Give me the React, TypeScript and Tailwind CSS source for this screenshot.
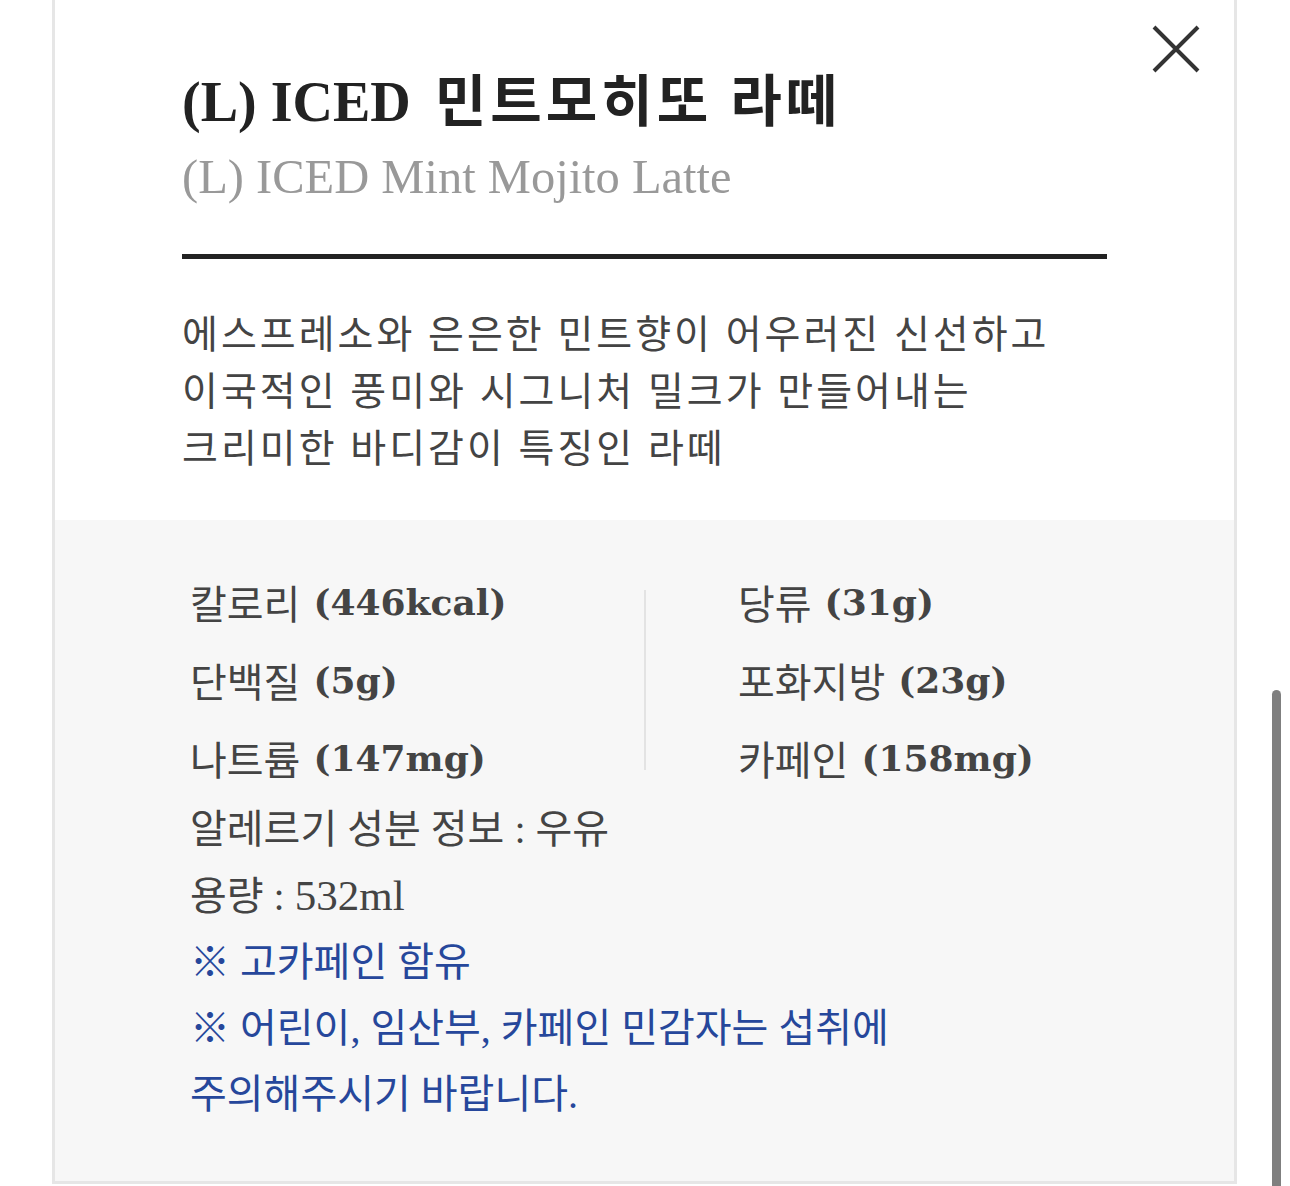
const serif = "font-['Liberation_Serif','Noto_Sans_CJK_KR',serif]";
const sans = "font-['Noto_Sans_CJK_KR','Noto_Sans',sans-serif]";
const value = "font-['DejaVu_Serif',serif] font-bold text-[36px] ml-[13px]";

const nutritionLeft = [
    { label: "칼로리", value: "(446kcal)" },
    { label: "단백질", value: "(5g)" },
    { label: "나트륨", value: "(147mg)" },
];

const nutritionRight = [
    { label: "당류", value: "(31g)" },
    { label: "포화지방", value: "(23g)" },
    { label: "카페인", value: "(158mg)" },
];

const NutritionRow = ({ label, amount }: { label: string; amount: string }) => (
    <div className="h-[78px] flex items-center text-[#444]">
        <span className={`${sans} text-[40px]`}>{label}</span>
        <span className={value}>{amount}</span>
    </div>
);

const App = () => {
    return (
        <div className="relative w-[1290px] h-[1186px] overflow-hidden bg-white">
            <div className="relative ml-[52px] w-[1185px] border-x-[3px] border-b-[3px] border-[#e6e6e6]">
                {/* close */}
                <button className="absolute top-[25px] right-[34px] w-[48px] h-[48px]">
                    <svg viewBox="0 0 48 48" className="w-full h-full">
                        <path d="M2 2 L46 46 M46 2 L2 46" stroke="#333" strokeWidth="4" />
                    </svg>
                </button>

                <div className="px-[127px] pt-[75px] pb-[43px]">
                    <h1 className={`${serif} text-[56px] leading-[55px] font-bold text-[#222]`}>
                        (L) ICED
                        <span className="ml-[24px] text-[56px] tracking-[4px]">민트모히또 라떼</span>
                    </h1>
                    <p className={`${serif} mt-[23px] text-[48.5px] leading-[48px] text-[#999]`}>
                        (L) ICED Mint Mojito Latte
                    </p>
                    <div className="mt-[53px] h-[5px] bg-[#222]"></div>
                    <div className={`${serif} mt-[47px] text-[39px] leading-[57px] tracking-[3px] text-[#444]`}>
                        <p>에스프레소와 은은한 민트향이 어우러진 신선하고</p>
                        <p>이국적인 풍미와 시그니처 밀크가 만들어내는</p>
                        <p>크리미한 바디감이 특징인 라떼</p>
                    </div>
                </div>

                <div className="bg-[#f7f7f7] pl-[135px] pr-[60px] pt-[43px] pb-[53px]">
                    <div className="grid grid-cols-[454px_2px_1fr]">
                        <div>
                            {nutritionLeft.map((n) => (
                                <NutritionRow key={n.label} label={n.label} amount={n.value} />
                            ))}
                        </div>
                        <div className="my-[27px] bg-[#e3e3e3]"></div>
                        <div className="pl-[92px]">
                            {nutritionRight.map((n) => (
                                <NutritionRow key={n.label} label={n.label} amount={n.value} />
                            ))}
                        </div>
                    </div>

                    <div className={`${serif} text-[40px] leading-[66px]`}>
                        <p className="text-[#444]">알레르기 성분 정보 : 우유</p>
                        <p className="text-[#444]">
                            용량 : <span className="text-[43px]">532ml</span>
                        </p>
                        <p className="text-[#26479b]">※ 고카페인 함유</p>
                        <p className="text-[#26479b]">※ 어린이, 임산부, 카페인 민감자는 섭취에</p>
                        <p className="text-[#26479b]">주의해주시기 바랍니다.</p>
                    </div>
                </div>
            </div>

            {/* scrollbar */}
            <div className="absolute left-[1272px] top-[690px] w-[9px] h-[520px] rounded-full bg-[#7f7f7f]"></div>
        </div>
    );
};

export default App;
